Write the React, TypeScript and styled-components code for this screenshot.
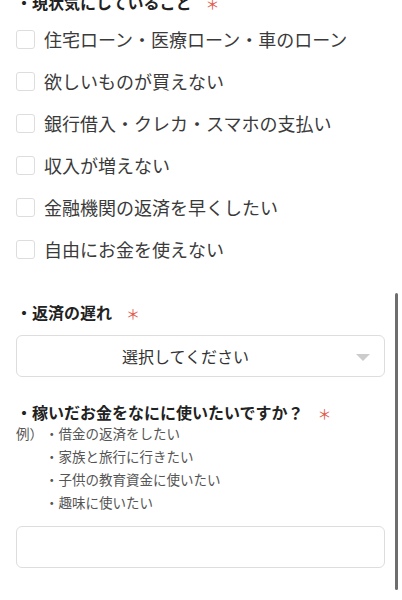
import React from "react";
import styled, { createGlobalStyle } from "styled-components";

const GlobalStyle = createGlobalStyle`
  html, body {
    margin: 0;
    padding: 0;
    background: #fff;
    overflow: hidden;
  }
  body {
    font-family: "Noto Sans CJK JP", "Noto Sans", sans-serif;
    color: #333;
  }
`;

const worries = [
  "住宅ローン・医療ローン・車のローン",
  "欲しいものが買えない",
  "銀行借入・クレカ・スマホの支払い",
  "収入が増えない",
  "金融機関の返済を早くしたい",
  "自由にお金を使えない",
];

const examples = [
  "借金の返済をしたい",
  "家族と旅行に行きたい",
  "子供の教育資金に使いたい",
  "趣味に使いたい",
];

export default function App() {
  return (
    <>
      <GlobalStyle />
      <Page>
        <Heading $top={-9}>
          ・現状気にしていること<Required>＊</Required>
        </Heading>
        <CheckList>
          {worries.map((w) => (
            <CheckRow key={w}>
              <Box type="checkbox" />
              <span>{w}</span>
            </CheckRow>
          ))}
        </CheckList>

        <Heading $top={31}>
          ・返済の遅れ<Required>＊</Required>
        </Heading>
        <SelectBox>
          <span>選択してください</span>
          <Arrow />
        </SelectBox>

        <Heading $top={24}>
          ・稼いだお金をなにに使いたいですか？<Required>＊</Required>
        </Heading>
        <Hint>
          <HintLabel>例）</HintLabel>
          <HintList>
            {examples.map((e) => (
              <li key={e}>・{e}</li>
            ))}
          </HintList>
        </Hint>
        <TextInput type="text" />
      </Page>
      <ScrollIndicator />
    </>
  );
}

const Page = styled.div`
  padding: 0 17px 0 16px;
  display: flex;
  flex-direction: column;
`;

const Heading = styled.h3<{ $top: number }>`
  margin: ${(p) => p.$top}px 0 0 0;
  font-size: 16px;
  line-height: 22px;
  font-weight: 700;
  color: #222;
  letter-spacing: 0;
`;

const Required = styled.span`
  margin-left: 14px;
  color: #e0594c;
  font-size: 14px;
  font-weight: 400;
`;

const CheckList = styled.div`
  margin-top: 4px;
  display: flex;
  flex-direction: column;
`;

const CheckRow = styled.label`
  height: 42px;
  display: flex;
  align-items: center;
  gap: 9px;
  font-size: 18px;
  color: #3a3a3a;
`;

const Box = styled.input`
  appearance: none;
  margin: 0;
  width: 19px;
  height: 19px;
  border: 1px solid #ddd;
  border-radius: 3px;
  background: #fff;
  flex-shrink: 0;
`;

const SelectBox = styled.div`
  margin-top: 11px;
  height: 42px;
  box-sizing: border-box;
  padding-right: 30px;
  border: 1px solid #ddd;
  border-radius: 6px;
  display: flex;
  align-items: center;
  justify-content: center;
  position: relative;
  font-size: 16px;
  color: #333;
`;

const Arrow = styled.span`
  position: absolute;
  right: 14px;
  top: 18px;
  width: 0;
  height: 0;
  border-left: 7px solid transparent;
  border-right: 7px solid transparent;
  border-top: 7px solid #ccc;
`;

const Hint = styled.div`
  display: flex;
  margin-top: -2px;
  font-size: 13.5px;
  line-height: 23px;
  color: #555;
`;

const HintLabel = styled.span`
  width: 29px;
  flex-shrink: 0;
`;

const HintList = styled.ul`
  list-style: none;
  margin: 0;
  padding: 0;
`;

const TextInput = styled.input`
  margin-top: 12px;
  height: 42px;
  box-sizing: border-box;
  border: 1px solid #ddd;
  border-radius: 6px;
  outline: none;
`;

const ScrollIndicator = styled.div`
  position: fixed;
  right: 4px;
  top: 293px;
  bottom: 10px;
  width: 3px;
  border-radius: 2px;
  background: #6e6e6e;
`;
